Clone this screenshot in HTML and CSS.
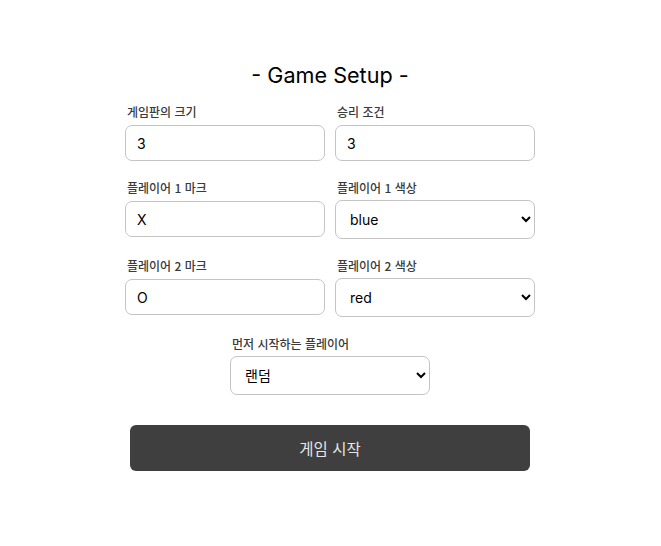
FILE: index.html
```html
<!DOCTYPE html>
<html lang="ko">
<head>
<meta charset="utf-8">
<title>Game Setup</title>
<link rel="stylesheet" href="styles.css">
</head>
<body>
<main class="setup">
  <h1 class="title">- Game Setup -</h1>
  <div class="grid">
    <div class="field">
      <label class="label" for="size">게임판의 크기</label>
      <input class="input" id="size" type="text" value="3">
    </div>
    <div class="field">
      <label class="label" for="win">승리 조건</label>
      <input class="input" id="win" type="text" value="3">
    </div>
    <div class="field">
      <label class="label" for="p1m">플레이어 1 마크</label>
      <input class="input" id="p1m" type="text" value="X">
    </div>
    <div class="field">
      <label class="label" for="p1c">플레이어 1 색상</label>
      <select class="select" id="p1c"><option>blue</option><option>red</option></select>
    </div>
    <div class="field">
      <label class="label" for="p2m">플레이어 2 마크</label>
      <input class="input" id="p2m" type="text" value="O">
    </div>
    <div class="field">
      <label class="label" for="p2c">플레이어 2 색상</label>
      <select class="select" id="p2c"><option>red</option><option>blue</option></select>
    </div>
  </div>
  <div class="field center">
    <label class="label" for="first">먼저 시작하는 플레이어</label>
    <select class="select" id="first"><option>랜덤</option><option>플레이어 1</option><option>플레이어 2</option></select>
  </div>
  <button class="start" type="button">게임 시작</button>
</main>
</body>
</html>
```
FILE: styles.css
```css
* { box-sizing: border-box; }
body {
  margin: 0;
  padding-right: 1px;
  background: #fff;
  font-family: "Inter", "Noto Sans CJK KR", sans-serif;
  color: #111;
}
.setup {
  width: 410px;
  margin: 0 auto;
  padding-top: 61px;
  display: flex;
  flex-direction: column;
  align-items: center;
}
.title {
  margin: 0 0 15px;
  font-size: 21.6px;
  font-weight: 400;
  line-height: 28px;
  color: #000;
}
.grid {
  width: 410px;
  display: grid;
  grid-template-columns: 200px 200px;
  column-gap: 10px;
  row-gap: 19px;
}
.field {
  display: flex;
  flex-direction: column;
}
.label {
  font-family: "Noto Sans CJK KR", "Inter", sans-serif;
  font-size: 12px;
  line-height: 16px;
  font-weight: 500;
  color: #3a3a3a;
  margin: 0 0 4px 2px;
}
.input {
  width: 200px;
  height: 36px;
  border: 1px solid #c4c4c4;
  border-radius: 7px;
  padding: 0 11px;
  font-family: "Inter", "Noto Sans CJK KR", sans-serif;
  font-size: 14px;
  color: #000;
  background: #fff;
  margin-top: 1px;
}
.select {
  width: 200px;
  height: 39px;
  border: 1px solid #c4c4c4;
  border-radius: 7px;
  padding: 0 10px;
  font-family: "Inter", "Noto Sans CJK KR", sans-serif;
  font-size: 14px;
  color: #000;
  background: #fff;
}
.center {
  margin-top: 19px;
}
.start {
  margin-top: 30px;
  width: 400px;
  height: 46px;
  border: 0;
  border-radius: 6px;
  background: #3f3f3f;
  color: #e6e6e6;
  font-family: "Noto Sans CJK KR", sans-serif;
  font-size: 15.5px;
  font-weight: 400;
}
```
